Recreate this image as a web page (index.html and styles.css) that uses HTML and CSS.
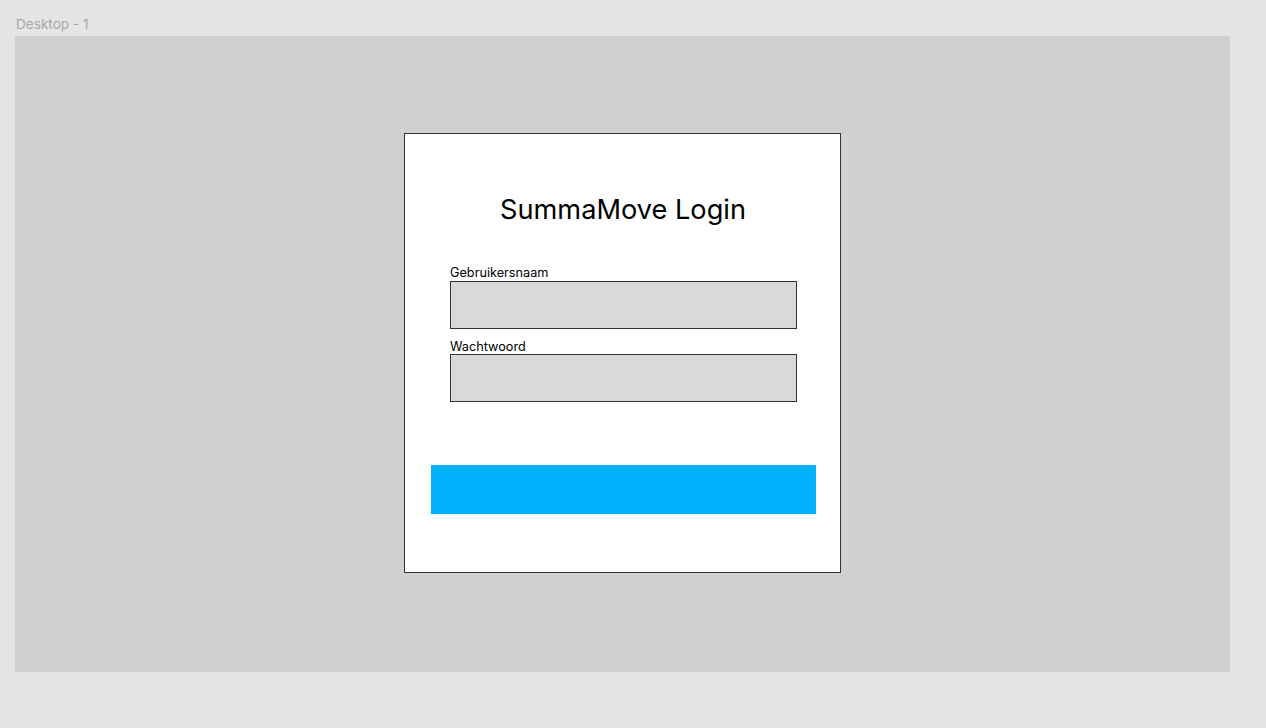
FILE: index.html
```html
<!DOCTYPE html>
<html lang="nl">
<head>
<meta charset="utf-8">
<title>Desktop - 1</title>
<link rel="stylesheet" href="styles.css">
</head>
<body>
<div class="canvas">
  <div class="frame-name">Desktop - 1</div>
  <div class="frame">
    <div class="card">
      <h1 class="title">SummaMove Login</h1>
      <div class="fields">
        <label class="field-label">Gebruikersnaam</label>
        <div class="input"></div>
        <label class="field-label second">Wachtwoord</label>
        <div class="input"></div>
      </div>
      <div class="button"></div>
    </div>
  </div>
</div>
</body>
</html>
```
FILE: styles.css
```css
* { box-sizing: border-box; }
html, body {
  margin: 0;
  padding: 0;
  background: #e5e5e5;
  font-family: Inter, "Liberation Sans", sans-serif;
}
.canvas {
  padding: 15px 0 0 15px;
  width: 1266px;
  height: 728px;
}
.frame-name {
  font-size: 13.6px;
  line-height: 17px;
  color: #a8a8a8;
  height: 21px;
  padding: 1px 0 0 1px;
}
.frame {
  width: 1215px;
  height: 636px;
  background: #d1d1d1;
  display: flex;
  justify-content: center;
  padding-top: 97px;
}
.card {
  width: 437px;
  height: 440px;
  background: #ffffff;
  border: 1px solid #333333;
  display: flex;
  flex-direction: column;
  padding-top: 59px;
}
.title {
  margin: 0;
  font-size: 27.2px;
  font-weight: 400;
  line-height: 33px;
  text-align: center;
  color: #000;
  padding-left: 1px;
}
.fields {
  margin-top: 38px;
  padding-left: 45px;
  display: flex;
  flex-direction: column;
}
.field-label {
  font-size: 12.7px;
  line-height: 16px;
  color: #000;
  height: 17px;
  padding-top: 1px;
}
.field-label.second {
  margin-top: 9px;
  height: 16px;
}
.input {
  width: 347px;
  height: 48px;
  background: #d9d9d9;
  border: 1px solid #333333;
}
.button {
  margin-top: 63px;
  margin-left: 26px;
  width: 385px;
  height: 49px;
  background: #00b2ff;
}
```
